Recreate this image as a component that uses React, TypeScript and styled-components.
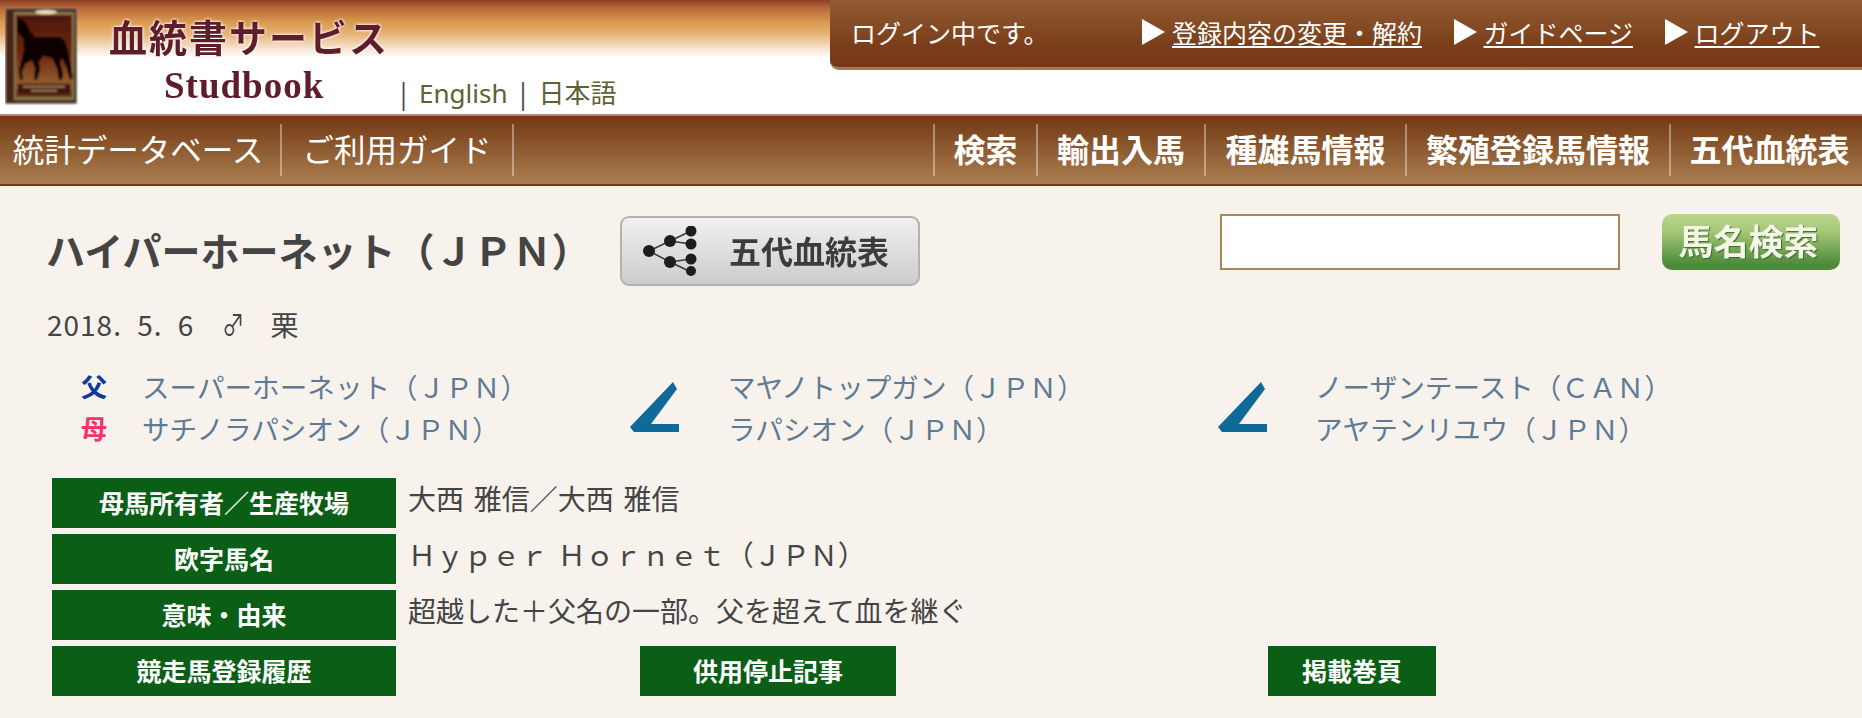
import React from "react";
import styled, { createGlobalStyle } from "styled-components";

const JP = `"Noto Sans CJK JP", "Noto Sans", sans-serif`;

const Global = createGlobalStyle`
  html, body { margin: 0; padding: 0; background: #f7f2ec; }
  body { font-family: ${JP}; color: #444; }
  a { color: inherit; text-decoration: none; }
`;

const Page = styled.div`
  width: 1862px;
  height: 718px;
  overflow: hidden;
  background: #f7f2ec;
`;

const Header = styled.header`
  height: 114px;
  display: flex;
  align-items: flex-start;
  background: linear-gradient(180deg, #8c4127 0, #b9683a 8px, #d9994f 22px, #e6b277 34px, #f3dcc0 46px, #fff 58px);
`;

const Logo = styled.svg`
  width: 73px;
  height: 97px;
  margin: 8px 0 0 5px;
  flex: none;
`;

const Brand = styled.div`
  width: 291px;
  margin-left: 31px;
  flex: none;
  font-weight: 700;
  color: #5f1d2c;
  filter: blur(0.5px);
`;

const BrandName = styled.div`
  font-size: 38px;
  line-height: 40px;
  margin-top: 16px;
  white-space: nowrap;
  letter-spacing: 2px;
  text-shadow: 0 0 3px #fff, 0 0 3px #fff;
`;

const BrandSub = styled.div`
  font-family: "Liberation Serif", serif;
  font-size: 37px;
  line-height: 40px;
  margin: 10px 0 0 55px;
  letter-spacing: 1px;
`;

const Lang = styled.div`
  display: flex;
  align-items: center;
  margin: 74px 0 0 0;
  font-size: 26px;
  line-height: 38px;
  width: 430px;
  flex: none;
  color: #444;
`;

const LangLink = styled.a`
  color: #5c6232;
  margin: 0 12px;
  font-family: "Noto Sans", "Noto Sans CJK JP", sans-serif;
`;

const LoginPanel = styled.div`
  flex: 1;
  height: 70px;
  display: flex;
  align-items: center;
  padding: 0 0 4px 21px;
  box-sizing: border-box;
  background: linear-gradient(180deg, #915b33 0, #7a3f1a 45px, #743814 100%);
  border-bottom: 3px solid #9c7a5c;
  border-bottom-left-radius: 9px;
  color: #fff;
  font-size: 25px;
`;

const LoginStatus = styled.span`
  width: 291px;
  flex: none;
`;

const LoginLink = styled.a`
  display: flex;
  align-items: center;
  gap: 7px;
  margin-right: 31.5px;
  white-space: nowrap;
`;

const LinkText = styled.span`
  text-decoration: underline;
  text-underline-offset: 3px;
`;

const Arrow = styled.i`
  width: 0;
  height: 0;
  border-style: solid;
  border-width: 13px 0 13px 23px;
  border-color: transparent transparent transparent #fff;
`;

const Nav = styled.nav`
  height: 68px;
  display: flex;
  justify-content: space-between;
  align-items: center;
  background: linear-gradient(180deg, #743814 0, #7c451d 12px, #ab7f52 100%);
  border-top: 2px solid #a58d78;
  border-bottom: 2px solid #6e3a1a;
`;

const NavGroup = styled.div`
  display: flex;
  align-items: center;
`;

const NavItem = styled.a<{ $bold?: boolean; $w: number }>`
  width: ${(p) => p.$w}px;
  height: 52px;
  display: flex;
  align-items: center;
  justify-content: center;
  box-sizing: border-box;
  padding-bottom: 4px;
  color: #fff;
  white-space: nowrap;
  font-size: ${(p) => (p.$bold ? 32 : 31.5)}px;
  font-weight: ${(p) => (p.$bold ? 700 : 400)};
  border-style: solid;
  border-color: rgba(255, 255, 255, 0.38);
  border-width: ${(p) => (p.$bold ? "0 0 0 2px" : "0 2px 0 0")};
  &:first-child { padding-right: ${(p) => (p.$bold ? 0 : 4)}px; }
  &:last-child { padding-left: ${(p) => (p.$bold ? 6 : 0)}px; }
`;

const Main = styled.main`
  padding: 30px 22px 0 46px;
`;

const TitleRow = styled.div`
  display: flex;
  align-items: flex-start;
  height: 72px;
`;

const Title = styled.h1`
  margin: -3px 0 0 0;
  width: 574px;
  flex: none;
  font-size: 39px;
  line-height: 72px;
  font-weight: 700;
  color: #444;
  white-space: nowrap;
`;

const TreeButton = styled.button`
  width: 300px;
  height: 70px;
  flex: none;
  display: flex;
  align-items: center;
  padding: 0 0 0 21px;
  gap: 30px;
  box-sizing: border-box;
  border: 2px solid #b5b2ac;
  border-radius: 9px;
  background: linear-gradient(180deg, #f0f0f0, #cccccc);
  color: #3c3c3c;
  font-family: ${JP};
  font-size: 32px;
  font-weight: 700;
`;

const TreeLabel = styled.span`
  padding-bottom: 2px;
  filter: blur(0.5px);
`;

const SearchBox = styled.input`
  width: 400px;
  height: 56px;
  margin: -2px 42px 0 300px;
  box-sizing: border-box;
  flex: none;
  border: 2px solid #a98557;
  background: #fff;
  outline: none;
`;

const SearchButton = styled.button`
  width: 178px;
  height: 56px;
  margin-top: -2px;
  flex: none;
  border: 0;
  border-radius: 10px;
  background: linear-gradient(180deg, #bcd78c 0, #a6c878 30%, #4d8b3a 90%);
  padding: 0 5px 0 0;
`;

const SearchLabel = styled.span`
  display: block;
  color: #f4f6e8;
  font-family: ${JP};
  font-size: 35px;
  line-height: 52px;
  font-weight: 700;
  text-shadow: 1px 1px 1px #3d6a2a;
  filter: blur(0.4px);
  padding-bottom: 4px;
`;

const BirthLine = styled.div`
  margin: 16px 0 0 1px;
  display: flex;
  align-items: center;
  font-size: 28px;
  letter-spacing: 1px;
  word-spacing: 8px;
  line-height: 40px;
  color: #444;
`;

const Sex = styled.span`
  display: inline-block;
  margin: 0 22px 0 25px;
  transform: scaleX(0.8);
`;

const Pedigree = styled.div`
  display: flex;
  margin-top: 21px;
  height: 90px;
`;

const Marks = styled.div`
  width: 96px;
  flex: none;
  padding-left: 35px;
  box-sizing: border-box;
`;

const Mark = styled.div<{ $color: string }>`
  height: 42px;
  line-height: 42px;
  font-size: 26px;
  font-weight: 700;
  color: ${(p) => p.$color};
`;

const HorseColumn = styled.div<{ $w: number }>`
  width: ${(p) => p.$w}px;
  flex: none;
`;

const HorseName = styled.a`
  display: block;
  height: 42px;
  line-height: 42px;
  font-size: 27.6px;
  color: #5f7a94;
  white-space: nowrap;
`;

const Chevron = styled.svg<{ $gap: number }>`
  width: 49px;
  height: 51px;
  flex: none;
  margin: 16px ${(p) => p.$gap}px 0 0;
`;

const Rows = styled.div`
  margin-top: 23px;
  margin-left: 6px;
  display: grid;
  grid-template-columns: 344px 244px 256px 372px 168px;
  grid-auto-rows: 50px;
  row-gap: 6px;
  width: 1400px;
`;

const Label = styled.div<{ $col?: number }>`
  background: #0b5e16;
  color: #fff;
  font-size: 25px;
  font-weight: 700;
  display: flex;
  align-items: center;
  justify-content: center;
  padding-bottom: 2px;
  box-sizing: border-box;
  grid-column: ${(p) => p.$col ?? 1};
`;

const Value = styled.div`
  grid-column: 2 / -1;
  padding-left: 12px;
  font-size: 28px;
  word-spacing: 3.5px;
  line-height: 41px;
  color: #444;
  white-space: nowrap;
`;

const ChevronIcon = ({ gap }: { gap: number }) => (
  <Chevron $gap={gap} viewBox="0 0 49 51">
    <polygon points="43,1 47,8 21,43 49,43 49,51 4,51 0,46" fill="#0f6a9a" />
  </Chevron>
);

export default function App() {
  return (
    <Page>
      <Global />
      <Header>
        <Logo viewBox="0 0 73 97">
          <defs>
            <filter id="soft"><feGaussianBlur stdDeviation="0.8" /></filter>
            <linearGradient id="plate" x1="0" y1="0" x2="0" y2="1">
              <stop offset="0" stopColor="#4e170b" />
              <stop offset="0.5" stopColor="#6d2a12" />
              <stop offset="0.8" stopColor="#93592c" />
              <stop offset="1" stopColor="#5c2e16" />
            </linearGradient>
          </defs>
          <g filter="url(#soft)">
            <rect width="72" height="96" fill="#77736a" />
            <rect x="1" y="1" width="70" height="94" fill="#4e2013" />
            <rect x="9" y="4" width="60" height="88" fill="#857748" />
            <rect x="11" y="7" width="56" height="82" fill="url(#plate)" />
            <ellipse cx="41" cy="4" rx="11" ry="2" fill="#f3dfc0" />
            <path d="M12 10 L15 11 L20 13 L25 23 L30 29 L42 29 L55 29 L60 33 L63 42 L66 58 L68 70 L65 72 L61 58 L57 50 L55 54 L58 66 L57 72 L54 72 L52 60 L47 50 L38 48 L34 54 L35 62 L32 72 L29 72 L30 60 L27 52 L20 56 L17 64 L18 72 L15 72 L14 62 L17 50 L19 42 L18 30 L14 26 L12 22 Z" fill="#070403" />
            <rect x="13" y="76" width="52" height="10" fill="#3f170b" />
            <rect x="18" y="78" width="42" height="1.5" fill="#a88a60" />
            <rect x="26" y="82" width="26" height="1.5" fill="#a88a60" />
          </g>
        </Logo>
        <Brand>
          <BrandName>血統書サービス</BrandName>
          <BrandSub>Studbook</BrandSub>
        </Brand>
        <Lang>
          |<LangLink href="#">English</LangLink>|<LangLink href="#">日本語</LangLink>
        </Lang>
        <LoginPanel>
          <LoginStatus>ログイン中です。</LoginStatus>
          <LoginLink href="#"><Arrow /><LinkText>登録内容の変更・解約</LinkText></LoginLink>
          <LoginLink href="#"><Arrow /><LinkText>ガイドページ</LinkText></LoginLink>
          <LoginLink href="#"><Arrow /><LinkText>ログアウト</LinkText></LoginLink>
        </LoginPanel>
      </Header>
      <Nav>
        <NavGroup>
          <NavItem href="#" $w={282}>統計データベース</NavItem>
          <NavItem href="#" $w={232}>ご利用ガイド</NavItem>
        </NavGroup>
        <NavGroup>
          <NavItem href="#" $bold $w={103}>検索</NavItem>
          <NavItem href="#" $bold $w={168}>輸出入馬</NavItem>
          <NavItem href="#" $bold $w={201}>種雄馬情報</NavItem>
          <NavItem href="#" $bold $w={264}>繁殖登録馬情報</NavItem>
          <NavItem href="#" $bold $w={193}>五代血統表</NavItem>
        </NavGroup>
      </Nav>
      <Main>
        <TitleRow>
          <Title>ハイパーホーネット（ＪＰＮ）</Title>
          <TreeButton>
            <svg width="56" height="50" viewBox="0 0 56 50">
              <g stroke="#3a3838" strokeWidth="1.5" fill="none">
                <path d="M6 25 L27 15 L48 5 M27 15 L48 18 M6 25 L27 36 L48 33 M27 36 L48 46" />
              </g>
              <g fill="#1f1c1c">
                <circle cx="6" cy="25" r="6" />
                <circle cx="27" cy="15" r="6" />
                <circle cx="27" cy="36" r="6" />
                <circle cx="48" cy="5" r="5.5" />
                <circle cx="48" cy="18" r="5.5" />
                <circle cx="48" cy="33" r="5.5" />
                <circle cx="48" cy="45" r="5" />
              </g>
            </svg>
            <TreeLabel>五代血統表</TreeLabel>
          </TreeButton>
          <SearchBox type="text" />
          <SearchButton><SearchLabel>馬名検索</SearchLabel></SearchButton>
        </TitleRow>
        <BirthLine>
          2018. 5. 6<Sex>♂</Sex>栗
        </BirthLine>
        <Pedigree>
          <Marks>
            <Mark $color="#0a3a9a">父</Mark>
            <Mark $color="#f5336b">母</Mark>
          </Marks>
          <HorseColumn $w={488}>
            <HorseName href="#">スーパーホーネット（ＪＰＮ）</HorseName>
            <HorseName href="#">サチノラパシオン（ＪＰＮ）</HorseName>
          </HorseColumn>
          <ChevronIcon gap={49} />
          <HorseColumn $w={490}>
            <HorseName href="#">マヤノトップガン（ＪＰＮ）</HorseName>
            <HorseName href="#">ラパシオン（ＪＰＮ）</HorseName>
          </HorseColumn>
          <ChevronIcon gap={48} />
          <HorseColumn $w={400}>
            <HorseName href="#">ノーザンテースト（ＣＡＮ）</HorseName>
            <HorseName href="#">アヤテンリユウ（ＪＰＮ）</HorseName>
          </HorseColumn>
        </Pedigree>
        <Rows>
          <Label>母馬所有者／生産牧場</Label>
          <Value>大西 雅信／大西 雅信</Value>
          <Label>欧字馬名</Label>
          <Value>Ｈｙｐｅｒ Ｈｏｒｎｅｔ（ＪＰＮ）</Value>
          <Label>意味・由来</Label>
          <Value>超越した＋父名の一部。父を超えて血を継ぐ</Value>
          <Label>競走馬登録履歴</Label>
          <Label $col={3}>供用停止記事</Label>
          <Label $col={5}>掲載巻頁</Label>
        </Rows>
      </Main>
    </Page>
  );
}
